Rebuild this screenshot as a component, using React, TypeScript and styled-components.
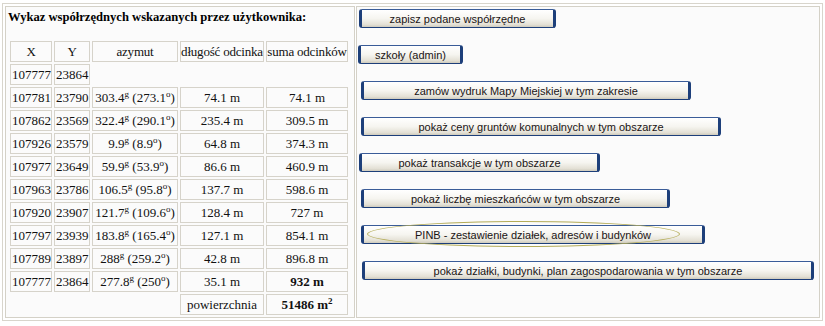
import { Fragment } from "react";
import styled, { createGlobalStyle } from "styled-components";

const GlobalStyle = createGlobalStyle`
  body {
    margin: 0;
    background-color: #ffffff;
    font-family: "Liberation Serif", "Times New Roman", serif;
  }
`;

const Page = styled.div`
  padding: 3px 0 0 2px;
`;

const Frame = styled.div`
  box-sizing: border-box;
  display: flex;
  gap: 1px;
  width: 821px;
  height: 318px;
  padding: 2px;
  border: 1px solid #d8d5cc;
`;

const Cell = styled.div<{ width: number }>`
  box-sizing: border-box;
  width: ${(props) => props.width}px;
  border: 1px solid #d4d1c7;
  background-color: #fbfbfb;
`;

const LeftCell = styled(Cell)`
  padding: 2px 0 0 2px;
`;

const RightCell = styled(Cell)`
  display: flex;
  flex-direction: column;
  align-items: flex-start;
  gap: 17px;
  padding-top: 2px;
`;

const Title = styled.p`
  margin: 0 0 16px 0;
  font-weight: 700;
  font-size: 12.6px;
  line-height: 16px;
  color: #000;
`;

const Table = styled.table`
  table-layout: fixed;
  width: 342px;
  border-collapse: separate;
  border-spacing: 2px;
  margin: -2px 0 0 0;
  font-size: 13px;
  color: #111;
`;

const Td = styled.td<{ align?: string; bold?: boolean; width?: number; head?: boolean }>`
  box-sizing: border-box;
  height: 21px;
  width: ${(props) => (props.width ? props.width + "px" : "auto")};
  padding: 0 ${(props) => (props.head ? 0 : 1)}px;
  border: 1px solid #d6d3ca;
  text-align: ${(props) => props.align || "center"};
  font-weight: ${(props) => (props.bold ? 700 : 400)};
  letter-spacing: ${(props) => (props.head ? "-0.2px" : "0")};
  white-space: nowrap;
  vertical-align: middle;
  line-height: 15px;

  sup {
    font-size: 9px;
    line-height: 0;
    vertical-align: 5px;
  }
`;

const Blank = styled.td`
  border: none;
`;

const ButtonWrap = styled.div<{ indent: number }>`
  position: relative;
  margin-left: ${(props) => props.indent}px;
`;

const Button = styled.button<{ width: number }>`
  box-sizing: border-box;
  display: block;
  width: ${(props) => props.width}px;
  height: 19px;
  padding: 0;
  border: 1px solid #1d3f7a;
  border-top-color: #3a5c98;
  border-left-width: 3px;
  border-right-width: 3px;
  border-radius: 3px;
  background: linear-gradient(#ffffff 0%, #f6f5f0 50%, #e4e1d6 85%, #cfcbbd 100%);
  font-family: "Liberation Sans", Arial, sans-serif;
  font-size: 11px;
  color: #1a1414;
  text-align: center;
  cursor: pointer;
`;

const Halo = styled.span`
  position: absolute;
  left: 6px;
  top: -4px;
  width: 313px;
  height: 26px;
  box-sizing: border-box;
  border: 1px solid #b4ac58;
  border-radius: 50%;
  pointer-events: none;
`;

const rows = [
  ["107781", "23790", "303.4", "273.1", "74.1 m", "74.1 m"],
  ["107862", "23569", "322.4", "290.1", "235.4 m", "309.5 m"],
  ["107926", "23579", "9.9", "8.9", "64.8 m", "374.3 m"],
  ["107977", "23649", "59.9", "53.9", "86.6 m", "460.9 m"],
  ["107963", "23786", "106.5", "95.8", "137.7 m", "598.6 m"],
  ["107920", "23907", "121.7", "109.6", "128.4 m", "727 m"],
  ["107797", "23939", "183.8", "165.4", "127.1 m", "854.1 m"],
  ["107789", "23897", "288", "259.2", "42.8 m", "896.8 m"],
  ["107777", "23864", "277.8", "250", "35.1 m", "932 m"],
];

const buttons = [
  { label: "zapisz podane współrzędne", indent: 2, width: 197 },
  { label: "szkoły (admin)", indent: 1, width: 105 },
  { label: "zamów wydruk Mapy Miejskiej w tym zakresie", indent: 4, width: 330 },
  { label: "pokaż ceny gruntów komunalnych w tym obszarze", indent: 4, width: 360 },
  { label: "pokaż transakcje w tym obszarze", indent: 2, width: 241 },
  { label: "pokaż liczbę mieszkańców w tym obszarze", indent: 4, width: 309 },
  { label: "PINB - zestawienie działek, adresów i budynków", indent: 4, width: 344, halo: true },
  { label: "pokaż działki, budynki, plan zagospodarowania w tym obszarze", indent: 5, width: 452 },
];

export default function App() {
  return (
    <>
      <GlobalStyle />
      <Page>
        <Frame>
          <LeftCell width={350}>
            <Title>Wykaz współrzędnych wskazanych przez użytkownika:</Title>
            <Table>
              <tbody>
                <tr>
                  <Td head width={42}>X</Td>
                  <Td head width={36}>Y</Td>
                  <Td head width={86}>azymut</Td>
                  <Td head width={84}>długość odcinka</Td>
                  <Td head width={82}>suma odcinków</Td>
                </tr>
                <tr>
                  <Td align="left">107777</Td>
                  <Td align="left">23864</Td>
                </tr>
                {rows.map((r, i) => (
                  <tr key={i}>
                    <Td align="left">{r[0]}</Td>
                    <Td align="left">{r[1]}</Td>
                    <Td>
                      <Fragment>
                        {r[2]}
                        <sup>g</sup> ({r[3]}
                        <sup>o</sup>)
                      </Fragment>
                    </Td>
                    <Td>{r[4]}</Td>
                    <Td bold={i === rows.length - 1}>{r[5]}</Td>
                  </tr>
                ))}
                <tr>
                  <Blank colSpan={3} />
                  <Td>powierzchnia</Td>
                  <Td bold>
                    51486 m<sup>2</sup>
                  </Td>
                </tr>
              </tbody>
            </Table>
          </LeftCell>
          <RightCell width={464}>
            {buttons.map((b) => (
              <ButtonWrap key={b.label} indent={b.indent}>
                <Button width={b.width}>{b.label}</Button>
                {b.halo && <Halo />}
              </ButtonWrap>
            ))}
          </RightCell>
        </Frame>
      </Page>
    </>
  );
}
